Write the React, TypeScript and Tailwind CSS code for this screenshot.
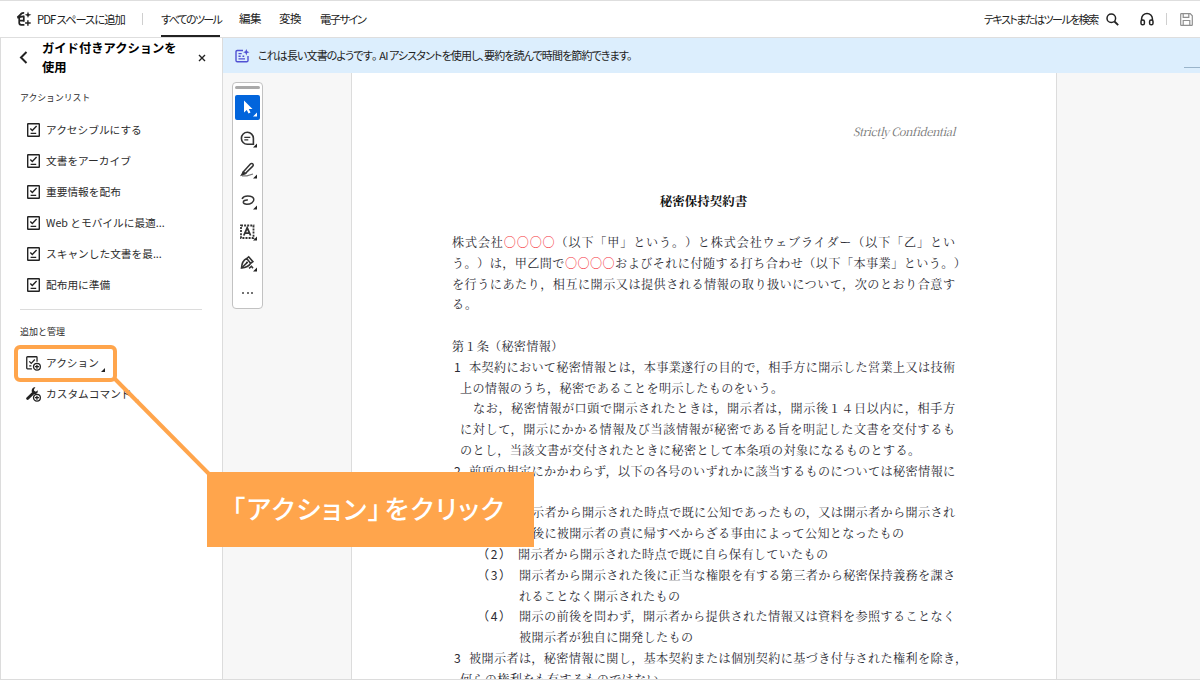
import type { ReactNode } from 'react';
import clsx from 'clsx';

const ACTIONS = [
  'アクセシブルにする',
  '文書をアーカイブ',
  '重要情報を配布',
  'Web とモバイルに最適...',
  'スキャンした文書を最...',
  '配布用に準備',
];

type Line = { no?: string; noClass?: string; text: ReactNode; className: string };

const CIRCLES = <span className="text-[#f5323c]">〇〇〇〇</span>;

const LINES: Line[] = [
  { text: <>株式会社{CIRCLES}（以下「甲」という。）と株式会社ウェブライダー（以下「乙」とい</>, className: 'w-[503px]' },
  { text: <>う。）は，甲乙間で{CIRCLES}およびそれに付随する打ち合わせ（以下「本事業」という。）</>, className: 'w-[514px]' },
  { text: 'を行うにあたり，相互に開示又は提供される情報の取り扱いについて，次のとおり合意す', className: 'w-[503px]' },
  { text: 'る。', className: 'w-[25px]' },
  { text: '', className: 'w-0' },
  { text: '第１条（秘密情報）', className: 'w-[111px]' },
  { no: '1', noClass: 'ml-[2px] w-[15px]', text: '本契約において秘密情報とは，本事業遂行の目的で，相手方に開示した営業上又は技術', className: 'w-[486px]' },
  { text: '上の情報のうち，秘密であることを明示したものをいう。', className: 'ml-[8px] w-[323px]' },
  { text: 'なお，秘密情報が口頭で開示されたときは，開示者は，開示後１４日以内に，相手方', className: 'ml-[21px] w-[482px]' },
  { text: 'に対して，開示にかかる情報及び当該情報が秘密である旨を明記した文書を交付するも', className: 'ml-[8px] w-[495px]' },
  { text: 'のとし，当該文書が交付されたときに秘密として本条項の対象になるものとする。', className: 'ml-[8px] w-[460px]' },
  { no: '2', noClass: 'ml-[2px] w-[15px]', text: '前項の規定にかかわらず，以下の各号のいずれかに該当するものについては秘密情報に', className: 'w-[486px]' },
  { text: '', className: 'w-0' },
  { text: '示者から開示された時点で既に公知であったもの，又は開示者から開示され', className: 'ml-[80px] w-[423px]' },
  { text: '後に被開示者の責に帰すべからざる事由によって公知となったもの', className: 'ml-[80px] w-[372px]' },
  { no: '（2）', noClass: 'ml-[25px] w-[41px] tracking-[1.6px]', text: '開示者から開示された時点で既に自ら保有していたもの', className: 'w-[310px]' },
  { no: '（3）', noClass: 'ml-[25px] w-[42px] tracking-[1.6px]', text: '開示者から開示された後に正当な権限を有する第三者から秘密保持義務を課さ', className: 'w-[436px]' },
  { text: 'れることなく開示されたもの', className: 'ml-[67px] w-[161px]' },
  { no: '（4）', noClass: 'ml-[25px] w-[42px] tracking-[1.6px]', text: '開示の前後を問わず，開示者から提供された情報又は資料を参照することなく', className: 'w-[436px]' },
  { text: '被開示者が独自に開発したもの', className: 'ml-[67px] w-[174px]' },
  { no: '3', noClass: 'ml-[2px] w-[15px]', text: '被開示者は，秘密情報に関し，基本契約または個別契約に基づき付与された権利を除き，', className: 'w-[498px]' },
  { text: '何らの権利をも有するものではない。', className: 'ml-[8px] w-[211px]' },
];

function PdfSpaceIcon() {
  return (
    <svg width="16" height="16" viewBox="0 0 16 16" fill="none" stroke="#222" strokeWidth="1.7">
      <path d="M8.2 2C6 1.8 4.8 2.4 4.2 4.6M1.2 6.6 8.4 5.2M3.2 6v5.8c0 1.3.7 2 2 2h3.2M3.2 9.6h4.6M1.4 6.4 4.4 3.6M7.8 5.2v5.6" />
      <path d="M12 .6l.9 2.3 2.5.9-2.5.9-.9 2.3-.9-2.3-2.5-.9 2.5-.9z" fill="#222" stroke="none" />
      <path d="M11.9 9.2v5.6M9.1 12h5.6" strokeWidth="1.4" />
    </svg>
  );
}

function AssistantIcon() {
  return (
    <svg width="15" height="14" viewBox="0 0 15 14" fill="none" stroke="#5151d3" strokeWidth="1.4">
      <path d="M8 1.5H2.3C1.5 1.5 1 2 1 2.8v8.7c0 .8.5 1.3 1.3 1.3h9.4c.8 0 1.3-.5 1.3-1.3V7" />
      <path d="M3.5 4.6h3.2M3.5 7.2h2.2M7.5 7.2h1.7M3.5 9.9h6.5" />
      <path d="M11.3 0l.9 2.3 2.3.9-2.3.9-.9 2.3-.9-2.3-2.3-.9 2.3-.9z" fill="#5151d3" stroke="none" />
    </svg>
  );
}

function ChecklistIcon() {
  return (
    <svg width="13" height="14" viewBox="0 0 13 14" fill="none" stroke="#222" strokeWidth="1.4">
      <rect x="0.7" y="0.7" width="11.6" height="12.6" rx="0.4" />
      <path d="M3.3 5.4l2 2 4.3-4.4M3.6 10.4h5.6" strokeWidth="1.4" />
    </svg>
  );
}

function ChecklistAddIcon() {
  return (
    <svg width="15" height="15" viewBox="0 0 14 14" fill="none" stroke="#222" strokeWidth="1.2">
      <path d="M5.5 12H1.4C1 12 .7 11.7.7 11.3V1.4C.7 1 1 .7 1.4.7h8.2c.4 0 .7.3.7.7v4" />
      <path d="M3.1 5l1.8 1.9L8.2 3.3M3 9.3h2" />
      <circle cx="10.2" cy="10" r="3.2" fill="#fff" />
      <path d="M10.2 8.1v3.8M8.3 10h3.8" />
    </svg>
  );
}

function WrenchAddIcon() {
  return (
    <svg width="15" height="15" viewBox="0 0 14 14" fill="none" stroke="#222" strokeWidth="1.2">
      <path d="M1.5 10.8 6.3 6" strokeWidth="2.6" strokeLinecap="round" />
      <path d="M8.8.3C6.4.2 4.9 2.2 5.5 4.6l1.8 2.2c1.6.3 3-.6 3.6-1.8L11 3 9.2 4.5 7.6 3.6 7.5 2z" fill="#222" stroke="none" />
      <circle cx="10.2" cy="10" r="3.2" fill="#fff" />
      <path d="M10.2 8.1v3.8M8.3 10h3.8" />
    </svg>
  );
}

function ToolButton({ active, children }: { active?: boolean; children: ReactNode }) {
  return (
    <div className={clsx('flex h-[25px] w-[25px] items-center justify-center rounded-[2px]', active && 'bg-[#0265dc]')}>
      <svg width="25" height="25" viewBox="0 0 25 25" fill="none" stroke="#333" strokeWidth="1.3">
        {children}
        <path d="M22 17.5V21.5H18z" fill={active ? '#fff' : '#222'} stroke="none" />
      </svg>
    </div>
  );
}

function TopBar() {
  return (
    <header className="flex h-[38px] shrink-0 border-y border-[#dedede] bg-white text-[11.5px] whitespace-nowrap text-[#222] [font-feature-settings:'palt']">
      <div className="flex items-center pl-4">
        <PdfSpaceIcon />
        <span className="ml-[5px] w-[88px] text-[11.3px] tracking-[-1px]">PDF スペースに追加</span>
        <div className="ml-[17px] h-3 w-px bg-[#cfcfcf]" />
      </div>
      <nav className="ml-[18px] flex">
        <div className="flex w-[59px] items-center border-b-2 border-[#222] pt-[2px] text-[11px] tracking-[-1.7px]">
          すべてのツール
        </div>
        <div className="ml-[19px] flex w-[22px] items-center tracking-[-0.5px]">編集</div>
        <div className="ml-[18px] flex w-[22px] items-center tracking-[-0.5px]">変換</div>
        <div className="ml-[19px] flex w-[47px] items-center text-[11.3px] tracking-[-1.6px]">電子サイン</div>
      </nav>
      <div className="ml-auto flex items-center">
        <span className="w-[116px] text-[11px] tracking-[-1.5px]">テキストまたはツールを検索</span>
        <svg className="ml-[6px]" width="13" height="13" viewBox="0 0 13 13" fill="none" stroke="#222" strokeWidth="1.5">
          <circle cx="5.3" cy="5.3" r="4.3" />
          <path d="M8.5 8.5 12.2 12.2" strokeWidth="1.8" />
        </svg>
        <svg className="ml-[21px]" width="14" height="14" viewBox="0 0 14 14" fill="none" stroke="#222" strokeWidth="1.5">
          <path d="M1.6 9V6.8a5.4 5.4 0 0 1 10.8 0V9" />
          <rect x="1" y="8" width="3.4" height="4.8" rx="1.6" />
          <rect x="9.6" y="8" width="3.4" height="4.8" rx="1.6" />
        </svg>
        <div className="ml-[12px] h-3 w-px bg-[#cfcfcf]" />
        <svg className="mr-[7px] ml-[13px]" width="13" height="13" viewBox="0 0 13 13" fill="none" stroke="#8f8f8f" strokeWidth="1.2">
          <path d="M.7 1.3c0-.4.3-.6.6-.6h8.9l2.1 2.1v8.9c0 .3-.2.6-.6.6H1.3c-.3 0-.6-.3-.6-.6z" />
          <path d="M3.2.8v3.6h5.6V.8M3.2 12.2V7.5h6.6v4.7" />
        </svg>
      </div>
    </header>
  );
}

function Sidebar() {
  return (
    <aside className="flex w-[223px] shrink-0 flex-col border-x border-[#dcdcdc] bg-white text-[10.7px] whitespace-nowrap text-[#2c2c2c]">
      <div className="flex h-[39px] items-center">
        <svg className="ml-[18px]" width="9" height="13" viewBox="0 0 9 13" fill="none" stroke="#222" strokeWidth="2">
          <path d="M7.5 1 2 6.5 7.5 12" />
        </svg>
        <h2 className="ml-[14px] w-[140px] pt-px text-[12.3px] leading-[19px] font-bold text-black">
          ガイド付きアクションを
          <br />
          使用
        </h2>
        <svg className="ml-[16px]" width="8" height="8" viewBox="0 0 8 8" stroke="#222" strokeWidth="1.4">
          <path d="M1 1 7 7M7 1 1 7" />
        </svg>
      </div>
      <p className="mt-[14px] pl-[19px] text-[8.85px] leading-[14px]">アクションリスト</p>
      <ul className="mt-[9px]">
        {ACTIONS.map((label) => (
          <li key={label} className="flex h-[31px] items-center gap-[6px] pl-[26px]">
            <ChecklistIcon />
            <span className="pt-px">{label}</span>
          </li>
        ))}
      </ul>
      <div className="mt-[9px] ml-[19px] h-px w-[182px] bg-[#dcdcdc]" />
      <p className="mt-[15px] pl-[19px] text-[9px] leading-[14px]">追加と管理</p>
      <ul className="mt-[9px]">
        <li className="flex h-[31px] items-center gap-[5px] pl-[25px]">
          <ChecklistAddIcon />
          <span>アクション</span>
          <svg className="mt-[13px] -ml-[3px]" width="4" height="4" viewBox="0 0 4 4">
            <path d="M4 0V4H0z" fill="#222" />
          </svg>
        </li>
        <li className="flex h-[31px] items-center gap-[5px] pl-[25px]">
          <WrenchAddIcon />
          <span>カスタムコマンド</span>
          <svg className="mt-[12px] -ml-[2px]" width="4" height="4" viewBox="0 0 4 4">
            <path d="M4 0V4H0z" fill="#ccc" />
          </svg>
        </li>
      </ul>
    </aside>
  );
}

function Toolbox() {
  return (
    <div className="mt-[9px] ml-[9px] flex h-[227px] w-[31px] flex-col items-center rounded-[4px] border border-[#c2c2c2] bg-white">
      <div className="mt-[3px] mb-[6px] h-[3px] w-[25px] shrink-0 rounded-full bg-[#a9a9a9]" />
      <div className="flex flex-col gap-[6px]">
        <ToolButton active>
          <path d="M9 5.5v12l2.8-2.6 1.7 3.5 2-.9-1.7-3.4h3.7z" fill="#fff" stroke="none" />
        </ToolButton>
        <ToolButton>
          <path d="M18.4 18.3h-6.1a6 6 0 1 1 6.1-6z" strokeWidth="1.6" />
          <path d="M9.3 11.3h6M9.3 13.8h4" />
        </ToolButton>
        <ToolButton>
          <path d="M8.2 15 15.4 7c.7-.8 2-.7 2.6.1.5.7.3 1.5-.2 2l-7.3 7.2-2.8.8z" strokeWidth="1.5" />
          <path d="M7 18.8h5l6-1.8" stroke="#777" />
          <path d="M8.2 15 6.5 18l4-1.5z" fill="#222" />
        </ToolButton>
        <ToolButton>
          <path d="M7 10.8c1.4-2.4 5.2-3.1 8.2-2.6 4.4.8 4.6 4.6 1.7 6.6-2.7 1.8-8.2 2-8.6-.4-.2-1.8 2-2.6 4.6-2.4" strokeWidth="1.5" />
        </ToolButton>
        <ToolButton>
          <rect x="6" y="6.5" width="12.5" height="12.5" strokeWidth="1.8" strokeDasharray="2 1.1" />
          <path d="M8.8 16.5 12.2 8.8l3.4 7.7M10 14.1h4.5" strokeWidth="1.8" />
        </ToolButton>
        <ToolButton>
          <path d="M6.5 18c.2-4.2 1.2-7.6 5.2-9.5l3.9 4.8c-1.6 2.8-4.9 4.2-9.1 4.7zM11.7 8.5l2-1.7 4.2 4.8-2.3 1.7" strokeWidth="1.6" />
          <path d="M6.5 18 11.8 12.9M14 18.3l2.5-2 1.5 2" strokeWidth="1.5" />
          <circle cx="12" cy="12.6" r="1" fill="#222" stroke="none" />
        </ToolButton>
      </div>
      <div className="mt-[17px] flex gap-[2.5px]">
        <i className="h-[2px] w-[2px] rounded-full bg-[#444]" />
        <i className="h-[2px] w-[2px] rounded-full bg-[#444]" />
        <i className="h-[2px] w-[2px] rounded-full bg-[#444]" />
      </div>
    </div>
  );
}

function DocumentPage() {
  return (
    <article className="ml-[88px] w-[706px] shrink-0 overflow-hidden border-x border-[#dcdcdc] bg-white pl-[100px] text-[#2b2b33]">
      <p className="mt-[50px] w-[503px] text-right font-['Noto_Serif_CJK_JP','Liberation_Serif',serif] text-[11.4px] leading-[16px] tracking-[-0.5px] text-[#777] italic">
        Strictly Confidential
      </p>
      <h1 className="mt-[52px] w-[503px] text-center font-['Noto_Serif_CJK_JP','Noto_Sans_CJK_JP',serif] text-[12.5px] leading-[20px] font-bold text-[#111]">
        秘密保持契約書
      </h1>
      <div className="mt-[21px] font-['Noto_Serif_CJK_JP','Noto_Sans_CJK_JP',serif] text-[12.1px] leading-[20.78px] font-normal whitespace-nowrap [text-spacing-trim:space-all]">
        {LINES.map((line, i) => (
          <div key={i} className="flex h-[20.8px]">
            {line.no && (
              <span className={clsx("shrink-0 font-['Noto_Sans_CJK_JP',sans-serif]", line.noClass)}>{line.no}</span>
            )}
            <span className={clsx('block shrink-0 [text-align-last:justify]', line.className)}>{line.text}</span>
          </div>
        ))}
      </div>
    </article>
  );
}

function Callout() {
  return (
    <>
      <div className="absolute top-[345px] left-[14px] h-[37px] w-[103px] rounded-[6px] border-4 border-[#ffa54c]" />
      <svg className="absolute top-[376px] left-[112px]" width="100" height="100" viewBox="0 0 100 100">
        <path d="M2 2 98 99" stroke="#ffa54c" strokeWidth="4" />
      </svg>
      <div className="absolute top-[472px] left-[207px] flex h-[75px] w-[327px] items-center bg-[#ffa54c] pb-[5px] pl-[25px] text-[26px] font-medium tracking-[1.7px] whitespace-nowrap text-white [font-feature-settings:'palt']">
        「アクション」<span className="ml-[2px]">をクリック</span>
      </div>
    </>
  );
}

export default function App() {
  return (
    <div className="relative flex h-[680px] w-[1200px] flex-col overflow-hidden border-b border-[#dcdcdc] bg-white font-['Noto_Sans_CJK_JP',sans-serif]">
      <TopBar />
      <div className="flex min-h-0 flex-1">
        <Sidebar />
        <main className="flex min-w-0 flex-1 flex-col bg-[#f7f7f7]">
          <div className="flex h-[35px] shrink-0 items-center bg-[#dceefd] pl-[12px] text-[11px] whitespace-nowrap text-[#222]">
            <AssistantIcon />
            <span className="ml-[8px] tracking-[-0.88px] [font-feature-settings:'palt']">
              これは長い文書のようです<span className="tracking-[2px]">。</span>AI アシスタントを使用し、要約を読んで時間を節約できます。
            </span>
            <div className="mt-[24px] ml-auto h-px w-[16px] bg-[#9ab4ca]" />
          </div>
          <div className="flex min-h-0 flex-1">
            <Toolbox />
            <DocumentPage />
          </div>
        </main>
      </div>
      <Callout />
    </div>
  );
}
